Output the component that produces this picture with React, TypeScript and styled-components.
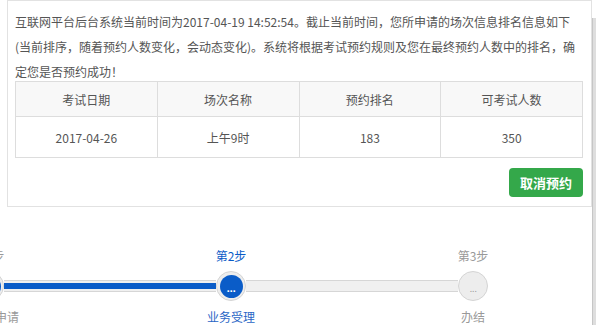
import React from "react";
import styled, { createGlobalStyle } from "styled-components";

const Global = createGlobalStyle`
  html, body { margin: 0; padding: 0; background: #fff; }
  body {
    width: 596px;
    height: 335px;
    overflow: hidden;
    font-family: "Noto Sans CJK SC", "Microsoft YaHei", sans-serif;
    color: #555;
  }
`;

const BLUE = "#0a5cc8";

const Page = styled.div`
  display: flex;
  width: 596px;
  height: 335px;
  overflow: hidden;
`;

const Main = styled.div`
  flex: 1;
  min-width: 0;
  padding-left: 7px;
  overflow: hidden;
`;

const ScrollTrack = styled.div`
  width: 4px;
  padding-top: 18px;
`;

const ScrollThumb = styled.div`
  height: 307px;
  background: #dedede;
  border-left: 1px solid #c6c6c6;
`;

const Panel = styled.section`
  border: 1px solid #e2e2e2;
  padding: 8px 8px 9px 7px;
`;

const Notice = styled.p`
  margin: 0;
  font-size: 12px;
  line-height: 25px;
  color: #555;
`;

const Table = styled.table`
  width: 100%;
  margin-top: -3px;
  border-collapse: collapse;
  table-layout: fixed;
  font-size: 12px;
  color: #555;
`;

const Th = styled.th`
  height: 34px;
  padding: 0;
  font-weight: normal;
  background: #f8f8f8;
  border: 1px solid #dddddd;
  text-align: center;
`;

const Td = styled.td`
  height: 40px;
  padding: 0;
  border: 1px solid #dddddd;
  text-align: center;
`;

const Actions = styled.div`
  display: flex;
  justify-content: flex-end;
  padding-top: 10px;
`;

const CancelButton = styled.button`
  height: 29px;
  padding: 0 11px;
  border: none;
  border-radius: 4px;
  background: #34a84a;
  color: #fff;
  font-family: "Noto Sans CJK SC", sans-serif;
  font-size: 13px;
  font-weight: bold;
  cursor: pointer;
`;

const Steps = styled.div`
  display: flex;
  margin-top: 39px;
  margin-left: -139px;
`;

const Step = styled.div`
  flex: 0 0 242px;
  display: flex;
  flex-direction: column;
  align-items: center;
`;

const StepTitle = styled.div<{ $active?: boolean }>`
  font-size: 12px;
  line-height: 20px;
  color: ${(p) => (p.$active ? BLUE : "#999")};
`;

const NodeRow = styled.div`
  display: flex;
  align-items: center;
  width: 100%;
  margin-top: 5px;
  height: 30px;
`;

const Segment = styled.div<{ $done?: boolean; $hidden?: boolean }>`
  flex: 1;
  height: 6px;
  padding: 2px 0;
  background: ${(p) => (p.$hidden ? "transparent" : "#f0f0f0")};
  border-top: 1px solid ${(p) => (p.$hidden ? "transparent" : "#d6d6d6")};
  border-bottom: 1px solid ${(p) => (p.$hidden ? "transparent" : "#d6d6d6")};
  &::after {
    content: "";
    display: block;
    height: 6px;
    background: ${(p) => (p.$done ? BLUE : "transparent")};
  }
`;

const Node = styled.div`
  flex: 0 0 30px;
  width: 30px;
  height: 30px;
  box-sizing: border-box;
  border-radius: 50%;
  background: #ededed;
  border: 1px solid #d4d4d4;
  display: flex;
  align-items: center;
  justify-content: center;
`;

const NodeCore = styled.div<{ $done?: boolean }>`
  width: 23px;
  height: 23px;
  border-radius: 50%;
  background: ${(p) => (p.$done ? BLUE : "transparent")};
  color: ${(p) => (p.$done ? "#fff" : "#999")};
  font-family: "DejaVu Sans", sans-serif;
  font-size: 9px;
  font-weight: ${(p) => (p.$done ? "bold" : "normal")};
  line-height: 23px;
  text-align: center;
  letter-spacing: -0.5px;
  padding-top: 3px;
  box-sizing: border-box;
`;

const StepLabel = styled.div<{ $active?: boolean }>`
  margin-top: 6px;
  font-size: 12px;
  line-height: 20px;
  color: ${(p) => (p.$active ? "#2a66c6" : "#999")};
  white-space: nowrap;
`;

type StepData = {
  title: string;
  label: string;
  done: boolean;
  active: boolean;
  leftDone: boolean;
  rightDone: boolean;
  last?: boolean;
};

const steps: StepData[] = [
  { title: "第1步", label: "考试预申请", done: true, active: false, leftDone: true, rightDone: true },
  { title: "第2步", label: "业务受理", done: true, active: true, leftDone: true, rightDone: false },
  { title: "第3步", label: "办结", done: false, active: false, leftDone: false, rightDone: false, last: true },
];

const headers = ["考试日期", "场次名称", "预约排名", "可考试人数"];
const row = ["2017-04-26", "上午9时", "183", "350"];

export default function App() {
  return (
    <>
      <Global />
      <Page>
        <Main>
          <Panel>
            <Notice>
              互联网平台后台系统当前时间为2017-04-19 14:52:54。截止当前时间，您所申请的场次信息排名信息如下(当前排序，随着预约人数变化，会动态变化)。系统将根据考试预约规则及您在最终预约人数中的排名，确定您是否预约成功！
            </Notice>
            <Table>
              <thead>
                <tr>
                  {headers.map((h) => (
                    <Th key={h}>{h}</Th>
                  ))}
                </tr>
              </thead>
              <tbody>
                <tr>
                  {row.map((c) => (
                    <Td key={c}>{c}</Td>
                  ))}
                </tr>
              </tbody>
            </Table>
            <Actions>
              <CancelButton>取消预约</CancelButton>
            </Actions>
          </Panel>
          <Steps>
            {steps.map((s) => (
              <Step key={s.title}>
                <StepTitle $active={s.active}>{s.title}</StepTitle>
                <NodeRow>
                  <Segment $done={s.leftDone} />
                  <Node>
                    <NodeCore $done={s.done}>...</NodeCore>
                  </Node>
                  <Segment $done={s.rightDone} $hidden={s.last} />
                </NodeRow>
                <StepLabel $active={s.active}>{s.label}</StepLabel>
              </Step>
            ))}
          </Steps>
        </Main>
        <ScrollTrack>
          <ScrollThumb />
        </ScrollTrack>
      </Page>
    </>
  );
}
